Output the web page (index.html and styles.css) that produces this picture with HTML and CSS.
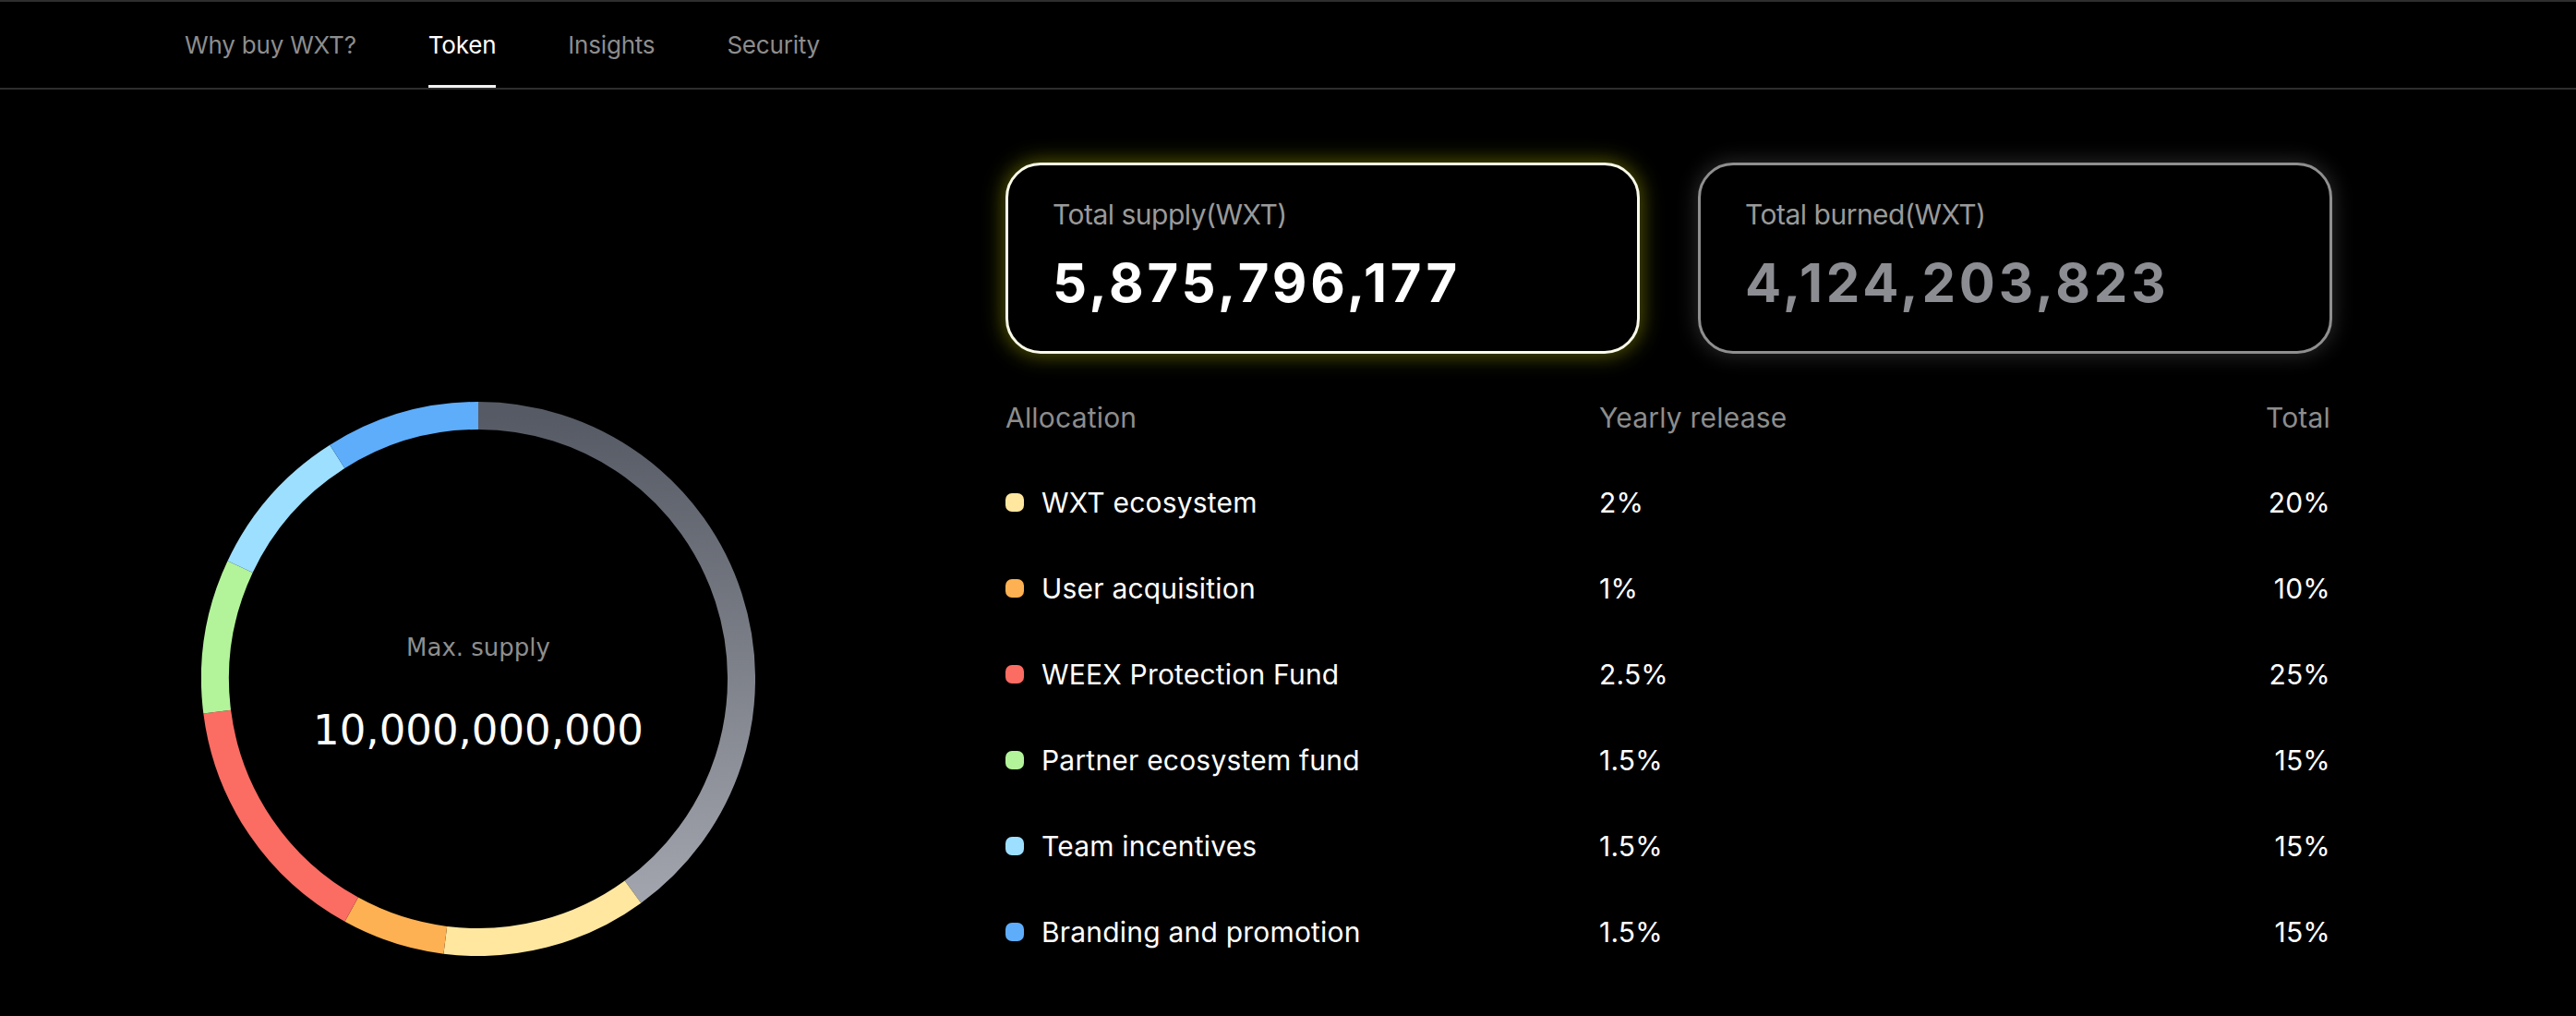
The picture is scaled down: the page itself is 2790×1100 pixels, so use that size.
FILE: index.html
```html
<!DOCTYPE html>
<html lang="en">
<head>
<meta charset="utf-8">
<title>WXT Token</title>
<link rel="stylesheet" href="styles.css">
</head>
<body>
<nav class="tabs">
  <a class="tab">Why buy WXT?</a>
  <a class="tab active">Token</a>
  <a class="tab">Insights</a>
  <a class="tab">Security</a>
</nav>
<main class="token">
  <section class="chart-col">
    <div class="donut">
      <svg class="ring" width="600" height="600" viewBox="0 0 600 600">
        <defs>
          <linearGradient id="grayGrad" gradientUnits="userSpaceOnUse" x1="0" y1="15" x2="0" y2="540">
            <stop offset="0" stop-color="#565a64"/>
            <stop offset="1" stop-color="#a2a5ad"/>
          </linearGradient>
        </defs>
        <g fill="none" stroke-width="30">
          <path d="M300 15 A285 285 0 0 1 467.5 530.6" stroke="url(#grayGrad)"/>
          <path d="M467.5 530.6 A285 285 0 0 1 264.3 582.8" stroke="#ffe7a0"/>
          <path d="M264.3 582.8 A285 285 0 0 1 162.7 549.7" stroke="#fdb152"/>
          <path d="M162.7 549.7 A285 285 0 0 1 17.2 335.7" stroke="#fb6c63"/>
          <path d="M17.2 335.7 A285 285 0 0 1 42.1 178.6" stroke="#b3f49a"/>
          <path d="M42.1 178.6 A285 285 0 0 1 147.3 59.4" stroke="#9ddfff"/>
          <path d="M147.3 59.4 A285 285 0 0 1 300 15" stroke="#5dadfb"/>
        </g>
      </svg>
      <div class="donut-center">
        <div class="max-label">Max. supply</div>
        <div class="max-value">10,000,000,000</div>
      </div>
    </div>
  </section>
  <section class="info-col">
    <div class="cards">
      <div class="card card-supply">
        <div class="card-label">Total supply(WXT)</div>
        <div class="card-value">5,875,796,177</div>
      </div>
      <div class="card card-burned">
        <div class="card-label">Total burned(WXT)</div>
        <div class="card-value">4,124,203,823</div>
      </div>
    </div>
    <div class="alloc">
      <div class="row head">
        <span>Allocation</span><span>Yearly release</span><span class="r">Total</span>
      </div>
      <div class="row">
        <span class="name"><i class="dot c-yellow"></i>WXT ecosystem</span><span>2%</span><span class="r">20%</span>
      </div>
      <div class="row">
        <span class="name"><i class="dot c-orange"></i>User acquisition</span><span>1%</span><span class="r">10%</span>
      </div>
      <div class="row">
        <span class="name"><i class="dot c-red"></i>WEEX Protection Fund</span><span>2.5%</span><span class="r">25%</span>
      </div>
      <div class="row">
        <span class="name"><i class="dot c-green"></i>Partner ecosystem fund</span><span>1.5%</span><span class="r">15%</span>
      </div>
      <div class="row">
        <span class="name"><i class="dot c-sky"></i>Team incentives</span><span>1.5%</span><span class="r">15%</span>
      </div>
      <div class="row">
        <span class="name"><i class="dot c-blue"></i>Branding and promotion</span><span>1.5%</span><span class="r">15%</span>
      </div>
    </div>
  </section>
</main>
</body>
</html>
```
FILE: styles.css
```css
* { box-sizing: border-box; }
html, body { margin: 0; padding: 0; background: #000; }
body {
  font-family: Inter, "Noto Sans", sans-serif;
  color: #fff;
  width: 2790px;
  height: 1100px;
  overflow: hidden;
}

.tabs {
  display: flex;
  gap: 78px;
  padding-left: 200px;
  height: 97px;
  border-top: 2px solid #2e2e2e;
  border-bottom: 2px solid #2e2e2e;
}
.tab {
  display: flex;
  align-items: center;
  height: 93px;
  padding-top: 2px;
  border-bottom: 3px solid transparent;
  font-size: 26px;
  letter-spacing: -0.2px;
  color: #8d8d8d;
}
.tab.active {
  color: #fff;
  border-bottom-color: #f2f2f2;
}

.token {
  display: flex;
  gap: 53px;
}
.chart-col {
  width: 1036px;
  padding-top: 338px;
  display: flex;
  justify-content: center;
}
.donut {
  position: relative;
  width: 600px;
  height: 600px;
}
.ring { display: block; }
.donut-center {
  position: absolute;
  inset: 0;
  display: flex;
  flex-direction: column;
  align-items: center;
  justify-content: center;
  font-family: "DejaVu Sans", Verdana, sans-serif;
  padding-top: 32px;
}
.max-label {
  font-size: 26px;
  color: #8e8e8e;
}
.max-value {
  margin-top: 48px;
  font-size: 45px;
  color: #fff;
}

.info-col {
  width: 1437px;
  padding-top: 79px;
}
.cards {
  display: flex;
  gap: 63px;
}
.card {
  width: 687px;
  height: 207px;
  border-radius: 38px;
  border: 3px solid #fbfbea;
  padding: 35px 0 0 48px;
  background: #000;
}
.card-supply {
  box-shadow: 0 0 22px 2px rgba(225, 235, 0, 0.38);
}
.card-burned {
  border-color: #8f8f8f;
  box-shadow: 0 0 22px 2px rgba(255, 255, 255, 0.16);
}
.card-label {
  font-size: 30px;
  line-height: 36px;
  letter-spacing: -0.5px;
  color: #9a9a9a;
}
.card-value {
  margin-top: 21px;
  font-size: 58px;
  line-height: 70px;
  font-weight: 700;
  letter-spacing: 3.8px;
  color: #fff;
}
.card-burned .card-value { color: #8c8d92; }

.alloc {
  margin-top: 23px;
}
.row {
  display: grid;
  grid-template-columns: 643px 1fr auto;
  align-items: center;
  height: 93px;
  font-size: 30px;
  letter-spacing: 0.2px;
  color: #fff;
}
.row.head { color: #8d8d8d; height: 91px; }
.row .r { text-align: right; padding-right: 2px; }
.name {
  display: flex;
  align-items: center;
}
.dot {
  width: 20px;
  height: 20px;
  border-radius: 7px;
  margin-right: 19px;
  flex: none;
}
.c-yellow { background: #ffe7a0; }
.c-orange { background: #fdb152; }
.c-red { background: #fb6c63; }
.c-green { background: #b3f49a; }
.c-sky { background: #9ddfff; }
.c-blue { background: #5dadfb; }
```
